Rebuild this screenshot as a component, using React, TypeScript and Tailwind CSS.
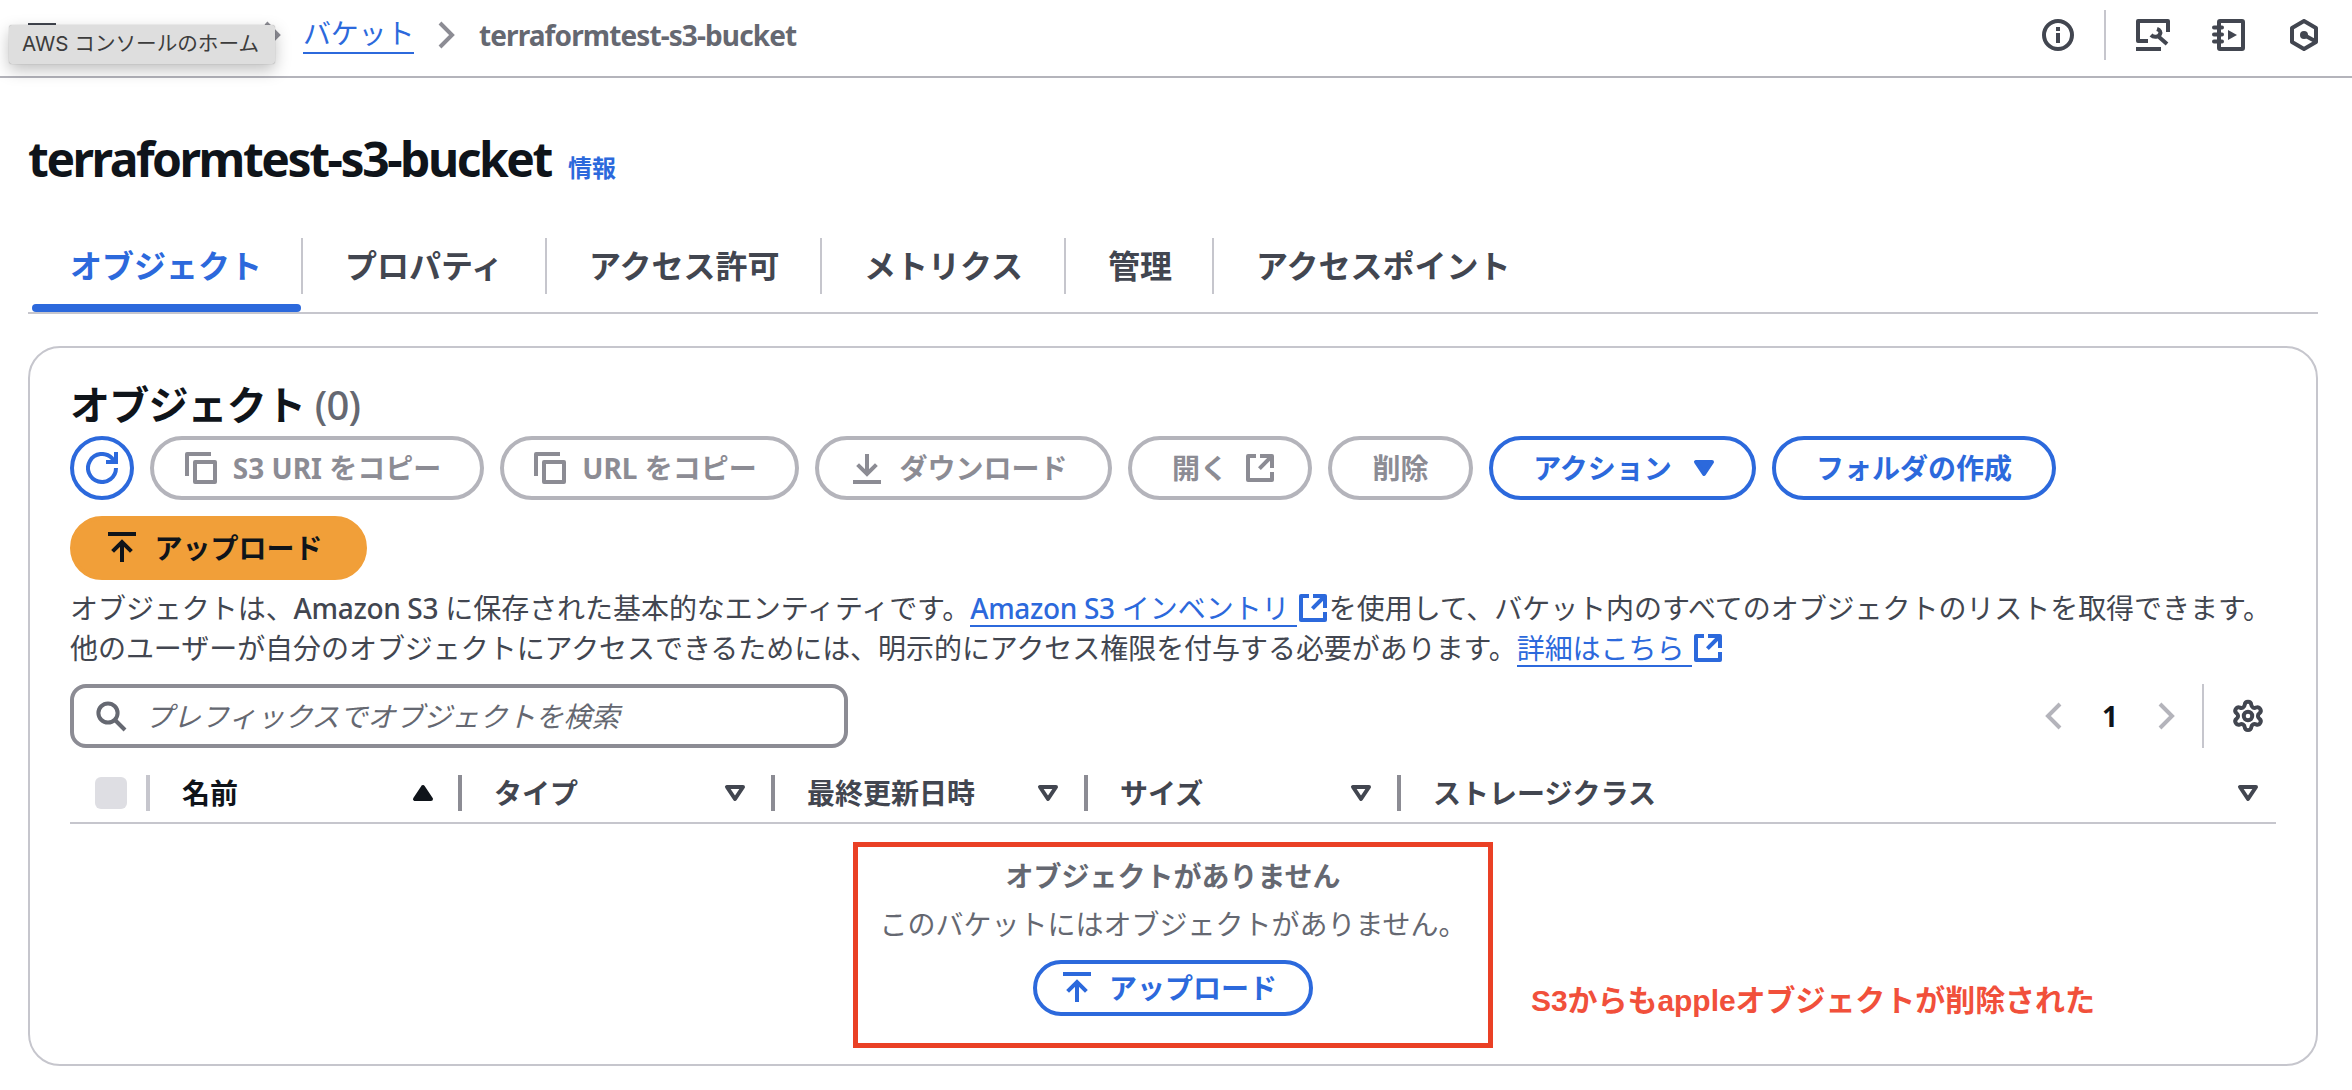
import React from "react";
import { Settings } from "lucide-react";

type IconProps = { className?: string };

function Icon({ className = "", size = 32, children }: IconProps & { size?: number; children: React.ReactNode }) {
  return (
    <svg className={`shrink-0 ${className}`} width={size} height={size} viewBox="0 0 16 16" fill="none" stroke="currentColor" strokeWidth="2">
      {children}
    </svg>
  );
}

const CopyIcon = () => (
  <Icon>
    <path d="M1 12V1h12" strokeLinejoin="round" />
    <path d="M5 5h10v10H5z" strokeLinejoin="round" />
  </Icon>
);
const UploadIcon = () => (
  <Icon>
    <path d="M1 1h14M8 15V5M3.3 9.7 8 5l4.700 4.700" />
  </Icon>
);
const DownloadIcon = () => (
  <Icon>
    <path d="M1 15h14M8 1v10M3.3 6.300 8 11l4.700-4.700" />
  </Icon>
);
const ExternalIcon = () => (
  <Icon>
    <path d="M6 2H2v12h12v-4" strokeLinejoin="round" />
    <path d="M8 2h6v6" strokeLinejoin="round" />
    <path d="M13.500 2.500 7.700 8.300" />
  </Icon>
);
const RefreshIcon = () => (
  <Icon>
    <path d="M15 8a7 7 0 1 1-2-4.900L14.500 5" />
    <path d="M15 0v5h-5" />
  </Icon>
);
const SearchIcon = () => (
  <Icon>
    <circle cx="6.500" cy="6.500" r="4.800" />
    <path d="m10 10 5 5" />
  </Icon>
);
const Chevron = ({ left = false, className = "" }: IconProps & { left?: boolean }) => (
  <Icon className={className}>{left ? <path d="M11 2 5 8l6 6" /> : <path d="m5 2 6 6-6 6" />}</Icon>
);
const SortIcon = ({ kind }: { kind: "up" | "down" | "filled" }) => (
  <Icon>
    {kind === "up" && <path d="M4 11h8L8 5z" fill="currentColor" strokeLinejoin="round" />}
    {kind === "down" && <path d="M4 5h8l-4 6z" strokeLinejoin="round" />}
    {kind === "filled" && <path d="M4 5h8l-4 6z" fill="currentColor" strokeLinejoin="round" />}
  </Icon>
);

function Button({
  children,
  left,
  right,
  className = "",
}: {
  children: React.ReactNode;
  left?: React.ReactNode;
  right?: React.ReactNode;
  className?: string;
}) {
  return (
    <button className={`flex shrink-0 items-center justify-center rounded-[32px] border-4 text-[28px] leading-[40px] font-bold whitespace-nowrap ${className}`}>
      {left && <span className="mr-4 -ml-2">{left}</span>}
      <span>{children}</span>
      {right && <span className="-mr-2 ml-4">{right}</span>}
    </button>
  );
}

const Latin = ({ children }: { children: React.ReactNode }) => <span className="font-medium tracking-[-0.35px]">{children}</span>;

const disabled = "h-16 border-[#b4b4bb] text-[#8c8c94]";
const normal = "border-[#2c69dc] text-[#2c69dc]";

const tabs = [
  { label: "オブジェクト", width: "w-[275px]" },
  { label: "プロパティ", width: "w-[244px]" },
  { label: "アクセス許可", width: "w-[275px]" },
  { label: "メトリクス", width: "w-[244px]" },
  { label: "管理", width: "w-[148px]" },
  { label: "アクセスポイント", width: "w-[340px]" },
];
const columns = ["タイプ", "最終更新日時", "サイズ"];

export default function App() {
  return (
    <div lang="ja" className="h-[1090px] w-[2352px] overflow-hidden bg-white font-['Noto_Sans','Noto_Sans_CJK_JP',sans-serif] text-[#424650]">
      <header className="relative flex h-[78px] items-center border-b-2 border-[#b4b4bb] pb-[6px] text-[28px]">
        <div className="flex h-[60px] items-center pl-[28px]">
          <div className="h-[24px] w-[28px] border-y-[4px] border-[#424650]" />
          <span className="ml-[40px] w-[142px] pl-[1px] font-medium whitespace-nowrap text-[#2c69dc]">Amazon S3</span>
        </div>
        <Chevron className="ml-[18px] text-[#8c8c94]" />
        <a className="ml-[15px] h-[38px] w-[111px] border-b-2 border-[#2c69dc] leading-[35px] tracking-[-0.2px] whitespace-nowrap text-[#2c69dc]">バケット</a>
        <Chevron className="ml-[16px] text-[#8c8c94]" />
        <span className="ml-[17px] text-[28px] font-bold tracking-[-0.9px] text-[#656871]">terraformtest-s3-bucket</span>
        <div className="mr-[33px] ml-auto flex items-center text-[#424650]">
          <Icon>
            <circle cx="8" cy="8" r="7" />
            <path d="M8 7v5M8 4v2" />
          </Icon>
          <div className="mr-[30px] ml-[30px] h-[50px] w-[2px] bg-[#c6c6cd]" />
          <svg width="34" height="32" viewBox="0 0 34 32" fill="none" stroke="currentColor" strokeWidth="4">
            <path d="M12 22H2V2h30v11M0 30h25" strokeLinejoin="round" />
            <path d="M31 25 23 18M15 16c3 3 8 2 9-1 1-2 0-4-3-5" />
          </svg>
          <svg className="ml-[42px]" width="34" height="32" viewBox="0 0 34 32" fill="none" stroke="currentColor" strokeWidth="4">
            <rect x="7" y="2" width="24" height="28" rx="1" />
            <path d="M2 8.500h8M2 15.500h8M2 22.500h8" strokeLinecap="round" />
            <path d="m16 11 9 5-9 5z" fill="currentColor" stroke="none" />
          </svg>
          <svg className="ml-[43px]" width="30" height="32" viewBox="0 0 30 32" fill="none" stroke="currentColor" strokeWidth="4">
            <path d="M15 2 27 9v14l-12 7L3 23V9z" strokeLinejoin="round" />
            <circle cx="15" cy="16" r="4" fill="currentColor" stroke="none" />
            <path d="m15 16 11 6" />
          </svg>
        </div>
        <div className="absolute top-[25px] left-[9px] flex h-[39px] w-[266px] items-center justify-center rounded-[3px] bg-[#dedede] pr-[3px] font-['Inter','Noto_Sans_CJK_JP',sans-serif] text-[20.6px] whitespace-nowrap text-[#3c3c3c] shadow-[0_6px_16px_rgba(0,0,0,0.25),0_0_1px_rgba(0,0,0,0.4)]">
          AWS コンソールのホーム
        </div>
      </header>

      <main className="pl-[28px]">
        <div className="flex h-[150px] items-baseline pt-[51px]">
          <h1 className="text-[48px] leading-[60px] font-bold tracking-[-2.45px] text-[#0f141a]">terraformtest-s3-bucket</h1>
          <a className="ml-[17px] text-[24px] font-bold text-[#2c69dc]">情報</a>
        </div>

        <nav className="flex h-[86px] w-[2290px] border-b-2 border-[#c6c6cd] text-[32px] font-bold">
          {tabs.map((t, i) => (
            <div key={t.label} className={`relative h-[84px] ${t.width} ${i === 0 ? "text-[#2c69dc]" : ""}`}>
              <div className={`mt-[10px] flex h-[56px] items-center pl-[42px] whitespace-nowrap ${i < 5 ? "border-r-2 border-[#c6c6cd]" : ""}`}>{t.label}</div>
              {i === 0 && <div className="absolute right-[2px] bottom-0 left-[4px] h-[8px] rounded-[4px] bg-[#2c69dc]" />}
            </div>
          ))}
        </nav>

        <section className="mt-[32px] h-[720px] w-[2290px] rounded-[32px] border-2 border-[#c6c6cd] pt-[30px] pl-[40px]">
          <h2 className="h-[58px] text-[40px] leading-[54px] font-bold tracking-[-0.8px] text-[#0f141a]">
            オブジェクト <span className="font-medium text-[#656871]">(0)</span>
          </h2>
          <div className="flex flex-wrap gap-4">
            <Button className={`h-16 w-16 ${normal}`}><RefreshIcon /></Button>
            <Button className={`w-[334px] ${disabled}`} left={<CopyIcon />}>S3 URI をコピー</Button>
            <Button className={`w-[299px] ${disabled}`} left={<CopyIcon />}>URL をコピー</Button>
            <Button className={`w-[297px] ${disabled}`} left={<DownloadIcon />}>ダウンロード</Button>
            <Button className={`w-[184px] ${disabled}`} right={<ExternalIcon />}>開く</Button>
            <Button className={`w-[145px] ${disabled}`}>削除</Button>
            <Button className={`h-16 w-[267px] ${normal}`} right={<SortIcon kind="filled" />}>アクション</Button>
            <Button className={`h-16 w-[284px] ${normal}`}>フォルダの作成</Button>
          </div>
          <Button className="mt-4 h-16 w-[297px] border-[#f19f39] bg-[#f19f39] text-[#0f141a]" left={<UploadIcon />}>アップロード</Button>

          <div className="mt-[8px] text-[28px] leading-[40px] tracking-[-0.05px] whitespace-nowrap">
            <div className="flex h-[40px]">
              <span>オブジェクトは、<Latin>Amazon S3</Latin> に保存された基本的なエンティティです。</span>
              <a className="h-[39px] border-b-2 border-[#2c69dc] text-[#2c69dc]"><Latin>Amazon S3</Latin> インベントリ&nbsp;</a>
              <span className="pt-[4px] text-[#2c69dc]"><ExternalIcon /></span>
              <span>を使用して、バケット内のすべてのオブジェクトのリストを取得できます。</span>
            </div>
            <div className="flex h-[40px]">
              <span>他のユーザーが自分のオブジェクトにアクセスできるためには、明示的にアクセス権限を付与する必要があります。</span>
              <a className="h-[39px] border-b-2 border-[#2c69dc] text-[#2c69dc]">詳細はこちら&nbsp;</a>
              <span className="pt-[4px] text-[#2c69dc]"><ExternalIcon /></span>
            </div>
          </div>

          <div className="mt-[16px] flex h-16 w-[2206px] items-center">
            <div className="flex h-16 w-[778px] items-center rounded-[16px] border-4 border-[#8c8c94] pl-[21px] text-[28px] text-[#656871] italic">
              <SearchIcon />
              <span className="ml-[18px]">プレフィックスでオブジェクトを検索</span>
            </div>
            <div className="mr-[11px] ml-auto flex h-16 items-center text-[28px] font-bold">
              <Chevron left className="text-[#b4b4bb]" />
              <span className="w-[80px] text-center text-[#0f141a]">1</span>
              <Chevron className="text-[#b4b4bb]" />
              <div className="mr-[27px] ml-[20px] h-16 w-[2px] bg-[#c6c6cd]" />
              <Settings size={34} strokeWidth={2.8} />
            </div>
          </div>

          <div className="mt-[12px] flex h-[64px] w-[2206px] items-center border-b-2 border-[#c6c6cd] pt-[4px] text-[28px] font-bold">
            <div className="ml-[25px] h-[32px] w-[32px] rounded-[6px] bg-[#dedee3]" />
            <div className="ml-[19px] h-[36px] w-[4px] bg-[#c6c6cd]" />
            <div className="flex w-[312px] items-center border-r-4 border-[#8c8c94] pr-[19px] pl-[32px] leading-[36px] text-[#0f141a]">
              <span className="flex-1">名前</span>
              <SortIcon kind="up" />
            </div>
            {columns.map((c) => (
              <div key={c} className="flex w-[313px] items-center border-r-4 border-[#8c8c94] pr-[20px] pl-[32px] leading-[36px]">
                <span className="flex-1 whitespace-nowrap">{c}</span>
                <SortIcon kind="down" />
              </div>
            ))}
            <div className="flex flex-1 items-center pr-[12px] pl-[32px]">
              <span className="flex-1">ストレージクラス</span>
              <SortIcon kind="down" />
            </div>
          </div>

          <div className="relative mt-[18px] ml-[783px] flex h-[206px] w-[640px] flex-col items-center border-[5px] border-[#ea4025] text-[28px] text-[#656871]">
            <div className="mt-[9px] leading-[40px] font-bold">オブジェクトがありません</div>
            <div className="mt-[8px] leading-[40px]">このバケットにはオブジェクトがありません。</div>
            <Button className={`mt-[16px] h-[56px] w-[280px] ${normal}`} left={<UploadIcon />}>アップロード</Button>
            <div className="absolute top-[134px] left-[673px] font-['Liberation_Sans','Noto_Sans_CJK_JP',sans-serif] text-[30px] leading-[40px] font-bold tracking-[-0.05px] whitespace-nowrap text-[#f1503b]">
              S3からもappleオブジェクトが削除された
            </div>
          </div>
        </section>
      </main>
    </div>
  );
}
